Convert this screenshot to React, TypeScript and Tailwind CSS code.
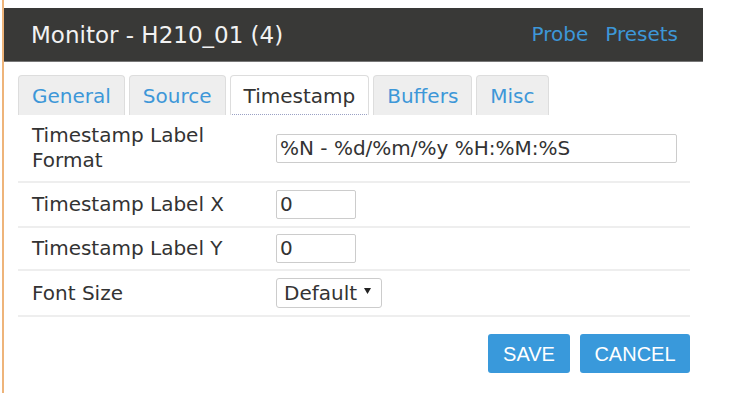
import React from "react";

const TABS = ["General", "Source", "Timestamp", "Buffers", "Misc"];
const ACTIVE = "Timestamp";

function Tab({ label }: { label: string }) {
  const active = label === ACTIVE;
  return (
    <div
      className={
        active
          ? "relative mr-[4px] rounded-t-[4px] border border-b-0 border-[#dddddd] bg-white px-[13px] pb-[6px] pt-[8px] leading-[25px] text-[#333333]"
          : "relative mr-[4px] rounded-t-[4px] border border-b-0 border-[#dddddd] bg-[#eeeeee] px-[13px] pb-[6px] pt-[8px] leading-[25px] text-[#3d97d8]"
      }
    >
      {label}
      {active && (
        <div className="absolute inset-x-[1px] bottom-0 border-b border-dotted border-[#9aa1c4]" />
      )}
    </div>
  );
}

function Row({
  label,
  children,
  className,
}: {
  label: React.ReactNode;
  children: React.ReactNode;
  className: string;
}) {
  return (
    <div className={"flex items-center border-b-2 border-[#eeeeee] " + className}>
      <div className="w-[258px] pl-[14px] leading-[25px] text-[#333333]">{label}</div>
      {children}
    </div>
  );
}

function TextBox({ value, width }: { value: string; width: string }) {
  return (
    <div
      className={
        "flex h-[29px] items-center rounded-[2px] border border-[#cccccc] pl-[3px] leading-[25px] text-[#333333] " +
        width
      }
    >
      {value}
    </div>
  );
}

export default function App() {
  return (
    <div
      className="h-[401px] w-[748px] bg-white pl-[2px] text-[20px]"
      style={{ fontFamily: '"DejaVu Sans", Verdana, sans-serif' }}
    >
      <div className="w-[701px] border-l-2 border-[#eeb47a] pb-[20px] pt-[8px]">
        <header className="flex h-[54px] items-center justify-between border-b border-[#777777] bg-[#393937] pl-[27px] pr-[25px]">
          <h1 className="text-[23px] leading-[28px] text-[#f2f2f2]">Monitor - H210_01 (4)</h1>
          <nav className="flex gap-[17px] leading-[25px] text-[#3d97d8]">
            <span>Probe</span>
            <span>Presets</span>
          </nav>
        </header>

        <div className="pl-[14px] pr-[13px]">
          <div className="mt-[13px] flex">
            {TABS.map((t) => (
              <Tab key={t} label={t} />
            ))}
          </div>

          <Row
            className="py-[8px]"
            label={
              <>
                Timestamp Label
                <br />
                Format
              </>
            }
          >
            <TextBox value="%N - %d/%m/%y %H:%M:%S" width="w-[401px]" />
          </Row>
          <Row className="py-[7px]" label="Timestamp Label X">
            <TextBox value="0" width="w-[80px]" />
          </Row>
          <Row className="py-[6px]" label="Timestamp Label Y">
            <TextBox value="0" width="w-[80px]" />
          </Row>
          <Row className="py-[7px]" label="Font Size">
            <div className="flex h-[30px] w-[106px] items-center rounded-[3px] border border-[#cccccc] pl-[7px] leading-[25px] text-[#333333]">
              <span>Default</span>
              <svg width="7" height="6" viewBox="0 0 7 6" className="ml-[7px] -mt-[4px]">
                <path d="M0 0H7L3.5 6Z" fill="#222222" />
              </svg>
            </div>
          </Row>

          <div
            className="mt-[17px] flex justify-end gap-[10px]"
            style={{ fontFamily: '"Liberation Sans", Arial, sans-serif' }}
          >
            <button className="h-[39px] w-[82px] rounded-[3px] bg-[#3999db] text-[20px] text-white">
              SAVE
            </button>
            <button className="h-[39px] w-[110px] rounded-[3px] bg-[#3999db] text-[20px] text-white">
              CANCEL
            </button>
          </div>
        </div>
      </div>
    </div>
  );
}
